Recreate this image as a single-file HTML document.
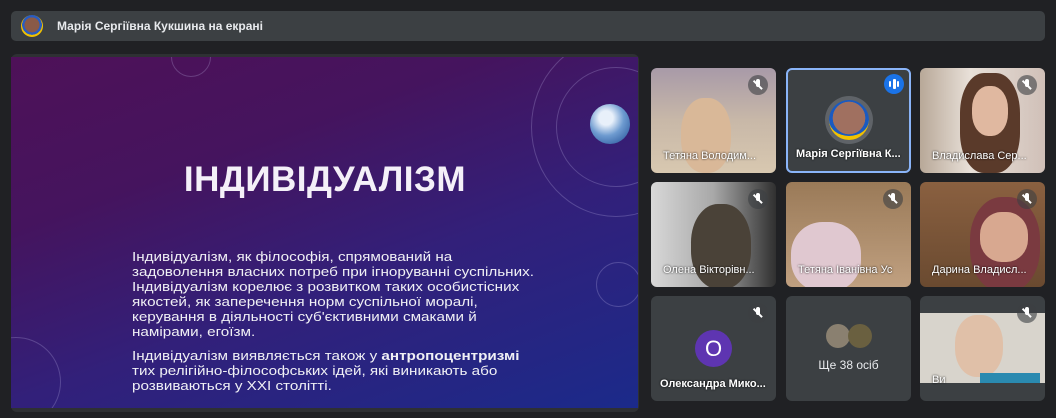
<!DOCTYPE html>
<html><head><meta charset="utf-8"><style>
*{margin:0;padding:0;box-sizing:border-box}
body{width:1056px;height:418px;background:#202124;font-family:"Liberation Sans",sans-serif;position:relative;overflow:hidden;color:#fff}
.bar{position:absolute;left:11px;top:11px;width:1034px;height:30px;background:#3c4043;border-radius:5px}
.bar .av{position:absolute;left:10px;top:4px;width:22px;height:22px;border-radius:50%;background:radial-gradient(circle at 50% 45%,#8a5a48 0 45%,#2a5cc0 46% 60%,#f2c200 61%)}
.bar span{position:absolute;left:46px;top:8px;font-size:12px;font-weight:bold;color:#e8eaed}
.slidebox{position:absolute;left:11px;top:54px;width:628px;height:358px;background:#2e3033;border-radius:6px}
.slide{position:absolute;left:11px;top:57px;width:627px;height:351px;background:linear-gradient(160deg,#4e1158 0%,#45145e 30%,#32207a 60%,#1b2a8a 100%);overflow:hidden}
.title{position:absolute;left:0;width:628px;top:103px;text-align:center;font-size:35px;font-weight:bold;letter-spacing:0.5px;color:#f4f0f8}
.body{position:absolute;left:121px;top:192px;font-size:12.8px;line-height:15px;color:#f0f0f5;white-space:nowrap;transform:scaleX(1.19);transform-origin:0 0}
.globe{position:absolute;left:579px;top:47px;width:40px;height:40px;border-radius:50%;background:radial-gradient(circle at 40% 35%,#e8f0fa 0 20%,#6e9bd0 50%,#2c5a9e 90%)}
.ring{position:absolute;border:1px solid rgba(200,190,240,.25);border-radius:50%}
.tile{position:absolute;width:125px;height:105px;border-radius:6px;overflow:hidden;background:#3c4043}
.name{position:absolute;left:12px;bottom:11px;font-size:11px;color:#fff;text-shadow:0 0 2px #000;white-space:nowrap}
.mic{position:absolute;right:8px;top:7px;width:20px;height:20px;border-radius:50%;background:rgba(60,64,67,.6)}
.mic:before{content:"";position:absolute;left:8px;top:4px;width:4px;height:8px;border-radius:2px;background:#fff}
.mic:after{content:"";position:absolute;left:4px;top:9px;width:12px;height:1.5px;background:#fff;transform:rotate(45deg)}
</style></head><body>
<div class="bar"><div class="av"></div><span>Марія Сергіївна Кукшина на екрані</span></div>
<div class="slidebox"></div>
<div class="slide">
 <div class="ring" style="left:160px;top:-20px;width:40px;height:40px"></div>
 <div class="ring" style="left:520px;top:-20px;width:170px;height:180px"></div>
 <div class="ring" style="left:545px;top:10px;width:120px;height:120px"></div>
 <div class="ring" style="left:585px;top:205px;width:45px;height:45px"></div>
 <div class="ring" style="left:-40px;top:280px;width:90px;height:90px"></div>
 <div class="globe"></div>
 <div class="title">ІНДИВІДУАЛІЗМ</div>
 <div class="body">Індивідуалізм, як філософія, спрямований на<br>задоволення власних потреб при ігноруванні суспільних.<br>Індивідуалізм корелює з розвитком таких особистісних<br>якостей, як заперечення норм суспільної моралі,<br>керування в діяльності суб'єктивними смаками й<br>намірами, егоїзм.<div style="height:9px"></div>Індивідуалізм виявляється також у <b>антропоцентризмі</b><br>тих релігійно-філософських ідей, які виникають або<br>розвиваються у XXI столітті.</div>
</div>

<div class="tile" style="left:651px;top:68px;background:linear-gradient(180deg,#a89aa8,#c8b8a8 50%,#d8c8b0)"><div style="position:absolute;left:30px;top:30px;width:50px;height:75px;border-radius:45%;background:#d9b898"></div><div class="mic"></div><div class="name">Тетяна Володим...</div></div>
<div class="tile" style="left:786px;top:68px;background:#3c4043;border:2px solid #8ab4f8"><div style="position:absolute;left:37px;top:26px;width:48px;height:48px;border-radius:50%;background:#5f6368"></div><div style="position:absolute;left:41px;top:30px;width:40px;height:40px;border-radius:50%;background:radial-gradient(circle,#a07060 0 60%,#1a5ac0 61%);border-bottom:4px solid #f2c200"></div><div style="position:absolute;right:5px;top:4px;width:20px;height:20px;border-radius:50%;background:#1a73e8"><div style="position:absolute;left:5px;top:7px;width:2px;height:6px;background:#fff;border-radius:1px"></div><div style="position:absolute;left:9px;top:5px;width:2.5px;height:10px;background:#fff;border-radius:1px"></div><div style="position:absolute;left:13px;top:7px;width:2px;height:6px;background:#fff;border-radius:1px"></div></div><div class="name" style="font-weight:bold;left:8px">Марія Сергіївна К...</div></div>
<div class="tile" style="left:920px;top:68px;background:linear-gradient(90deg,#b8a898,#e8e0d8 40%,#d0c0b8)"><div style="position:absolute;left:40px;top:5px;width:60px;height:100px;border-radius:40%;background:#5a3a2a"></div><div style="position:absolute;left:52px;top:18px;width:36px;height:50px;border-radius:45%;background:#e0b8a0"></div><div class="mic"></div><div class="name">Владислава Сер...</div></div>

<div class="tile" style="left:651px;top:182px;background:linear-gradient(90deg,#d8d8d8,#a8a8a8 50%,#303030)"><div style="position:absolute;left:40px;top:22px;width:60px;height:85px;border-radius:45%;background:#4a4238"></div><div class="mic"></div><div class="name">Олена Вікторівн...</div></div>
<div class="tile" style="left:786px;top:182px;background:linear-gradient(180deg,#9a7a58,#c0a080)"><div style="position:absolute;left:5px;top:40px;width:70px;height:70px;border-radius:45%;background:#e0c8d0"></div><div class="mic"></div><div class="name">Тетяна Іванівна Ус</div></div>
<div class="tile" style="left:920px;top:182px;background:linear-gradient(180deg,#8a6040,#6a4a30)"><div style="position:absolute;left:50px;top:15px;width:70px;height:95px;border-radius:45%;background:#7a3a40"></div><div style="position:absolute;left:60px;top:30px;width:48px;height:50px;border-radius:45%;background:#d8a890"></div><div class="mic"></div><div class="name">Дарина Владисл...</div></div>

<div class="tile" style="left:651px;top:296px"><div style="position:absolute;left:44px;top:34px;width:37px;height:37px;border-radius:50%;background:#5e35b1;font-size:22px;text-align:center;line-height:37px">О</div><div class="mic"></div><div class="name" style="font-weight:bold;left:9px">Олександра Мико...</div></div>
<div class="tile" style="left:786px;top:296px"><div style="position:absolute;left:40px;top:28px;width:24px;height:24px;border-radius:50%;background:#8a8070"></div><div style="position:absolute;left:62px;top:28px;width:24px;height:24px;border-radius:50%;background:#6a6040"></div><div style="position:absolute;left:0;width:125px;top:62px;text-align:center;font-size:12px;color:#e8eaed">Ще 38 осіб</div></div>
<div class="tile" style="left:920px;top:296px"><div style="position:absolute;left:0;top:17px;width:125px;height:70px;background:#d8d4cc"><div style="position:absolute;left:35px;top:2px;width:48px;height:62px;border-radius:45%;background:#e0c0a8"></div><div style="position:absolute;left:60px;top:60px;width:60px;height:10px;background:#2a8ab0"></div></div><div class="mic"></div><div class="name" style="bottom:15px">Ви</div></div>
</body></html>
